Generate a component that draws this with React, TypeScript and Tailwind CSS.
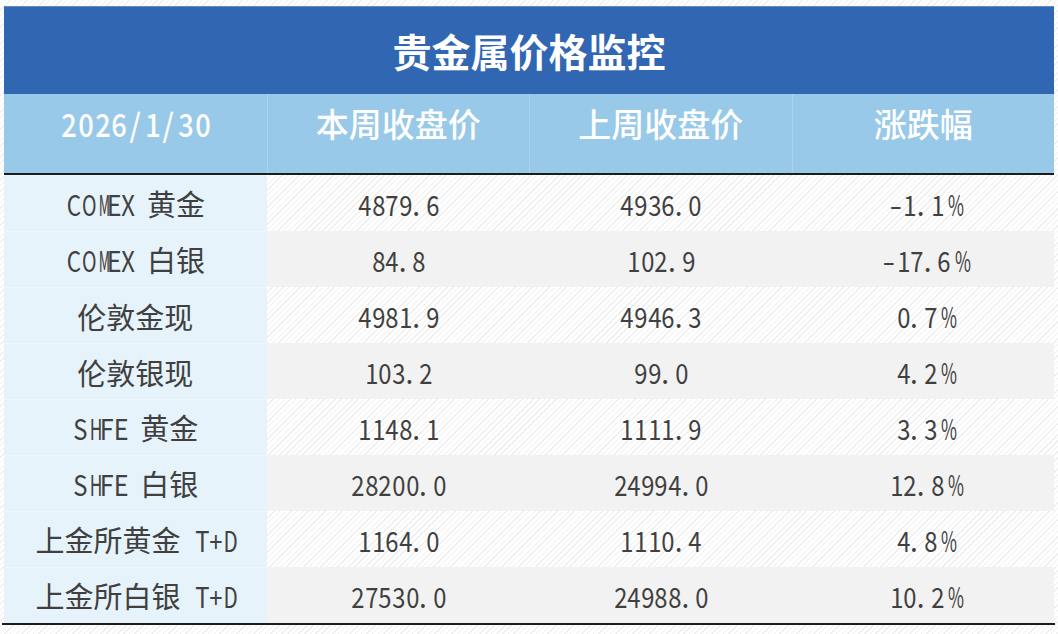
import React from "react";

const FONT = '"Noto Sans CJK SC", "Noto Sans", sans-serif';

const SC: Record<string, number> = {
  C: 0.8, O: 0.7, M: 0.5, E: 0.9, X: 0.85, S: 0.85, H: 0.62, F: 0.9, T: 0.85, D: 0.74,
  "+": 0.85, "/": 0.9, "%": 0.62, ".": 1, "-": 1.3, " ": 1,
};

function T({ s, w, latinSize }: { s: string; w: number; latinSize: number }) {
  return (
    <span className="inline-flex items-baseline whitespace-nowrap">
      {s.split("").map((c, i) => {
        const ascii = c.charCodeAt(0) < 128;
        if (!ascii) return <span key={i}>{c}</span>;
        const sc = SC[c] ?? 0.85;
        return (
          <span key={i} className="inline-block text-center" style={{ width: w }}>
            <span
              className={`inline-block ${c === "." ? "-translate-x-[2px]" : ""}`}
              style={{ fontSize: latinSize, transform: `scaleX(${sc})` }}
            >
              {c === " " ? "\u00a0" : c}
            </span>
          </span>
        );
      })}
    </span>
  );
}

const rows: [string, string, string, string][] = [
  ["COMEX 黄金", "4879.6", "4936.0", "-1.1%"],
  ["COMEX 白银", "84.8", "102.9", "-17.6%"],
  ["伦敦金现", "4981.9", "4946.3", "0.7%"],
  ["伦敦银现", "103.2", "99.0", "4.2%"],
  ["SHFE 黄金", "1148.1", "1111.9", "3.3%"],
  ["SHFE 白银", "28200.0", "24994.0", "12.8%"],
  ["上金所黄金 T+D", "1164.0", "1110.4", "4.8%"],
  ["上金所白银 T+D", "27530.0", "24988.0", "10.2%"],
];

const headers = ["2026/1/30", "本周收盘价", "上周收盘价", "涨跌幅"];

export default function App() {
  return (
    <div
      className="w-[1058px] h-[634px] pt-[6px] pl-[4px] bg-[repeating-linear-gradient(135deg,#ffffff_0px,#ffffff_3px,#eeeeee_3px,#eeeeee_4px)]"
      style={{ fontFamily: FONT }}
    >
      <div className="w-[1050px]">
        <div className="h-[88px] bg-[#3166b3] border-t border-[#5d8acb] flex items-center justify-center text-white font-bold text-[39px] leading-[39px]">
          贵金属价格监控
        </div>
        <div className="grid grid-cols-4 h-[81px] bg-[#98c9e8] border-b-2 border-[#1c1c1c]">
          {headers.map((h, i) => (
            <div
              key={i}
              className={`flex justify-center pt-[6px] text-white font-medium text-[33px] leading-[46px] ${i > 0 ? "border-l border-[#a9d3ee]" : ""}`}
            >
              <T s={h} w={16.7} latinSize={32} />
            </div>
          ))}
        </div>
        {rows.map((r, ri) => (
          <div
            key={ri}
            className={`grid grid-cols-4 h-[56px] text-[#404040] text-[29px] leading-[40px] ${ri % 2 === 1 ? "bg-[#f2f2f2]" : ""}`}
          >
            {r.map((c, ci) => (
              <div
                key={ci}
                className={`flex items-center justify-center ${ci === 0 ? "bg-[#e6f3fa] border-t border-[#eef7fc]" : ""}`}
              >
                <T s={c} w={13.6} latinSize={28} />
              </div>
            ))}
          </div>
        ))}
        <div className="h-[2px] bg-[#1c1c1c] -ml-[2px] w-[1053px]" />
      </div>
    </div>
  );
}
